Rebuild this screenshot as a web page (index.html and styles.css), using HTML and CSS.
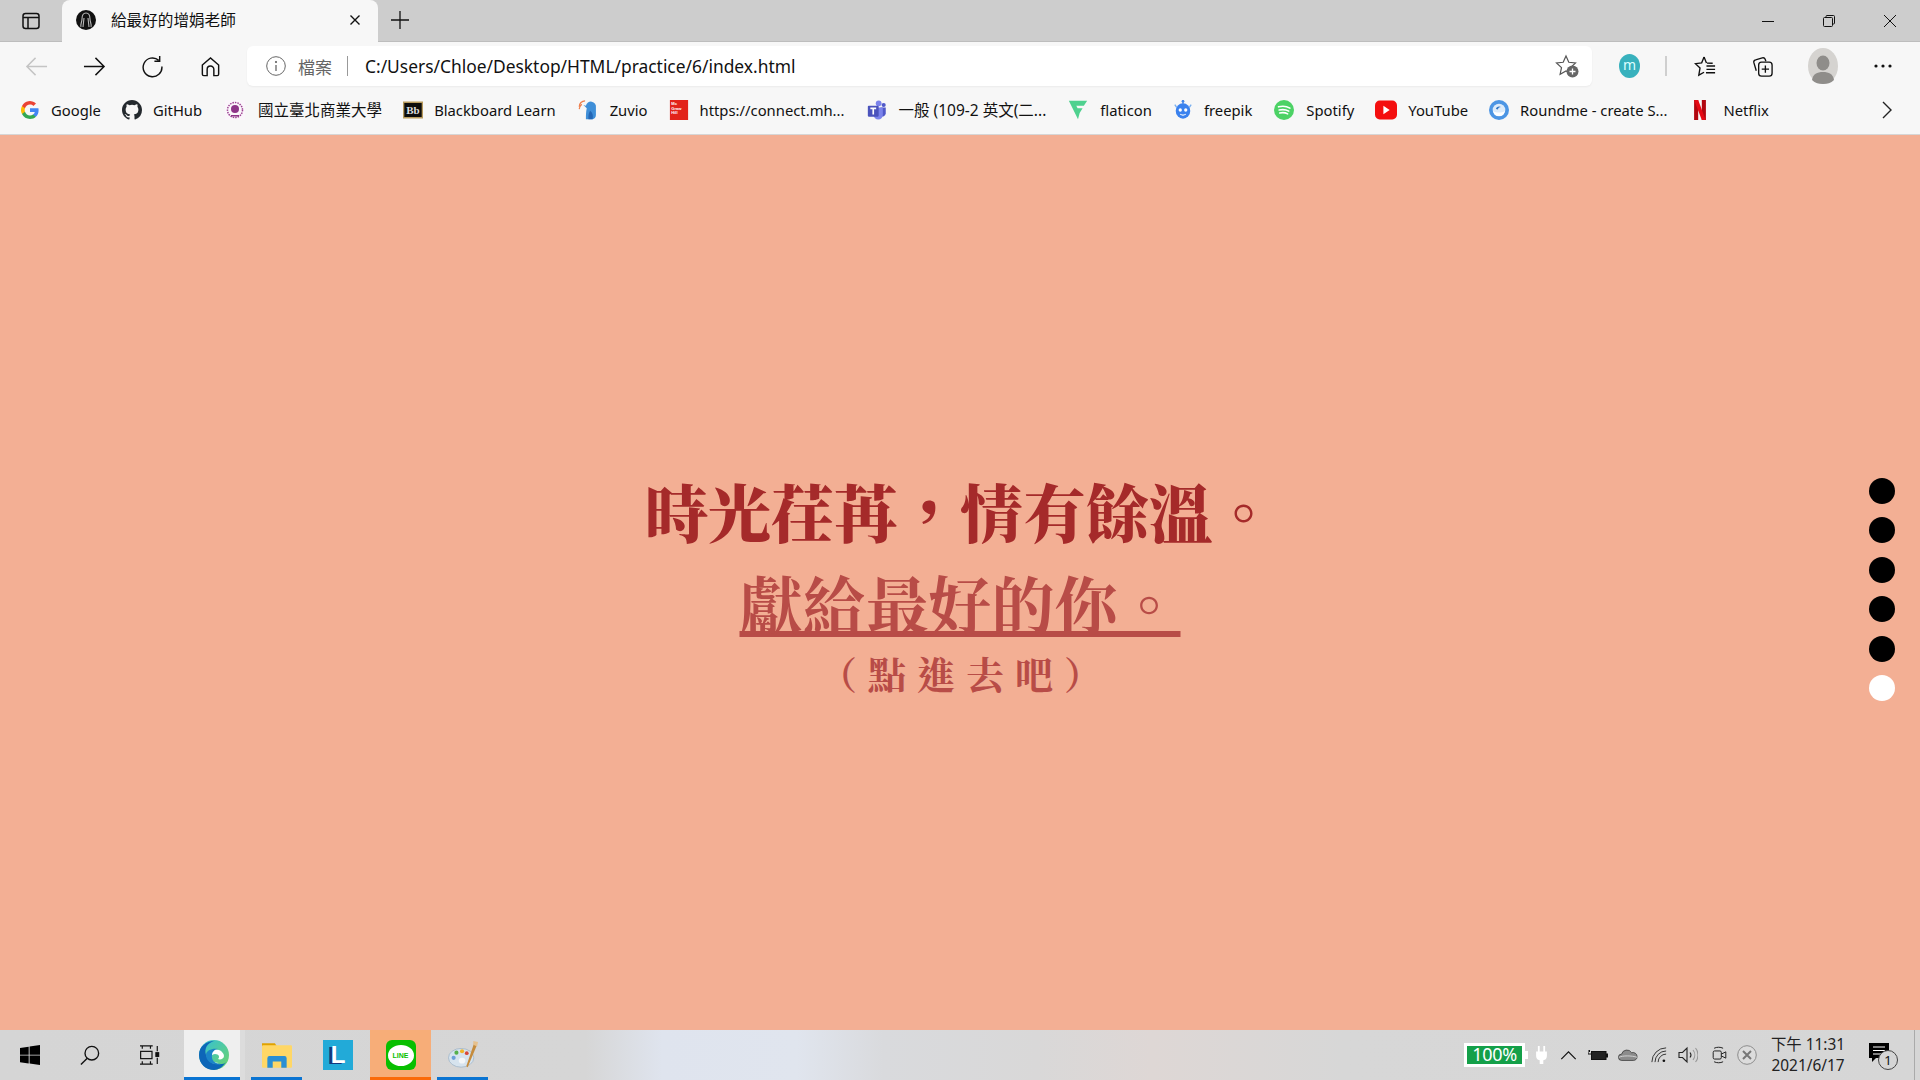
FILE: index.html
```html
<!DOCTYPE html>
<html lang="zh-Hant">
<head>
<meta charset="utf-8">
<title>給最好的增娟老師</title>
<link rel="stylesheet" href="styles.css">
</head>
<body>
<div class="tabstrip">
  <div class="tabside"><svg class="ic20" viewBox="0 0 20 20" fill="none" stroke="#111" stroke-width="1.5"><rect x="2" y="2.5" width="16" height="15" rx="2.5"/><path d="M2 6.5h16M7 6.5v11"/></svg></div>
  <div class="tab">
    <svg class="favicon" viewBox="0 0 20 20"><circle cx="10" cy="10" r="10" fill="#111"/><path d="M10 3c-3 0-4 3-4 6s-2 6-1 8M10 3c3 0 4 3 4 6s2 6 1 8M8 8l-1 9M12 8l1 9" stroke="#bbb" stroke-width="1.1" fill="none"/></svg>
    <span class="tabtitle">給最好的增娟老師</span>
    <svg class="tabx" viewBox="0 0 12 12" stroke="#111" stroke-width="1.4"><path d="M1.5 1.5l9 9M10.5 1.5l-9 9"/></svg>
  </div>
  <svg class="newtab" viewBox="0 0 18 18" stroke="#111" stroke-width="1.3"><path d="M9 0v18M0 9h18"/></svg>
  <div class="winctl">
    <svg class="winbtn" viewBox="0 0 14 14" stroke="#111" stroke-width="1"><path d="M1 7.5h12"/></svg>
    <svg class="winbtn" viewBox="0 0 14 14" fill="none" stroke="#111" stroke-width="1"><rect x="1.5" y="3.5" width="9" height="9" rx="1"/><path d="M4 3.5V2.5a1 1 0 0 1 1-1h6.500a1 1 0 0 1 1 1V9a1 1 0 0 1-1 1h-1"/></svg>
    <svg class="winbtn" viewBox="0 0 14 14" stroke="#111" stroke-width="1"><path d="M1 1l12 12M13 1L1 13"/></svg>
  </div>
</div>

<div class="toolbar">
  <div class="navbtns">
    <svg class="ic24" viewBox="0 0 24 24" fill="none" stroke="#c4c4c4" stroke-width="1.5"><path d="M23 12H2M11 3l-9 9 9 9"/></svg>
    <svg class="ic24" viewBox="0 0 24 24" fill="none" stroke="#111" stroke-width="1.5"><path d="M1 12h21M13 3l9 9-9 9"/></svg>
    <svg class="ic24" viewBox="0 0 24 24" fill="none" stroke="#111" stroke-width="1.5"><path d="M18.500 5.500A9.800 9.800 0 1 0 21.800 12M19.500 1v5.500H14"/></svg>
    <svg class="ic24" viewBox="0 0 24 24" fill="none" stroke="#111" stroke-width="1.5"><path d="M3.500 10.500L12 3l8.500 7.500V20a1.500 1.500 0 0 1-1.500 1.500h-3.500V15a3.500 3.500 0 0 0-7 0v6.500H5A1.500 1.500 0 0 1 3.500 20z"/></svg>
  </div>
  <div class="addr">
    <svg class="info" viewBox="0 0 20 20" fill="none" stroke="#666" stroke-width="1"><circle cx="10" cy="10" r="9.300"/><path d="M10 9v6" stroke-width="1.300"/><circle cx="10" cy="6" r=".7" fill="#666"/></svg>
    <span class="scheme">檔案</span>
    <span class="sep"></span>
    <span class="url">C:/Users/Chloe/Desktop/HTML/practice/6/index.html</span>
    <svg class="favadd" viewBox="0 0 24 24"><path d="M11 2l2.800 6.300 6.700.7-5 4.600 1.400 6.700L11 17l-5.900 3.300 1.400-6.700-5-4.600 6.700-.7z" fill="none" stroke="#555" stroke-width="1.200"/><circle cx="17.500" cy="17.500" r="6" fill="#666"/><path d="M17.500 14.500v6M14.500 17.500h6" stroke="#fff" stroke-width="1.300"/></svg>
  </div>
  <div class="tools">
    <span class="mext">m</span>
    <span class="vsep"></span>
    <svg class="ic24" viewBox="0 0 24 24" fill="none" stroke="#111" stroke-width="1.400"><path d="M13.500 8.500L19.500 8.600M10.500 2L13 8.300M10.500 2L8 8.200 1.500 9l4.800 4.500L5 21l5.500-3"/><path d="M13 11.500h9M13 15h9M12.500 18.500h9.500"/></svg>
    <svg class="ic24" viewBox="0 0 24 24" fill="none" stroke="#111" stroke-width="1.400"><path d="M5.500 16.500L3 8a2.500 2.500 0 0 1 1.800-3l7-2a2.500 2.500 0 0 1 3 1.500l.7 2"/><rect x="8" y="7.500" width="14" height="14.500" rx="3"/><path d="M15 11v7.500M11.200 14.800h7.600"/></svg>
    <span class="avatar"><svg viewBox="0 0 30 36"><ellipse cx="15" cy="18" rx="15" ry="18" fill="#d5d3d0"/><ellipse cx="15" cy="15" rx="6.500" ry="7.500" fill="#8f8d8a"/><path d="M4 32c1-6 5-8 11-8s10 2 11 8c-3 3-7 4-11 4s-8-1-11-4z" fill="#8f8d8a"/></svg></span>
    <svg class="dots3" viewBox="0 0 18 4" fill="#111"><circle cx="2" cy="2" r="1.600"/><circle cx="9" cy="2" r="1.600"/><circle cx="16" cy="2" r="1.600"/></svg>
  </div>
</div>

<div class="bookmarks">
  <a class="bm"><svg class="bi" viewBox="0 0 20 20"><path d="M18.600 10.200c0-.7-.1-1.300-.2-1.900H10v3.600h4.800a4.100 4.100 0 0 1-1.800 2.700v2.200h2.900c1.700-1.600 2.700-3.900 2.700-6.600z" fill="#4285f4"/><path d="M10 19c2.400 0 4.500-.8 5.900-2.200L13 14.600c-.8.500-1.800.9-3 .9-2.300 0-4.300-1.600-5-3.700H2v2.300A9 9 0 0 0 10 19z" fill="#34a853"/><path d="M5 11.800a5.300 5.300 0 0 1 0-3.600V5.900H2a9 9 0 0 0 0 8.200z" fill="#fbbc05"/><path d="M10 4.600c1.300 0 2.500.5 3.400 1.300L16 3.400A9 9 0 0 0 2 5.900l3 2.300c.7-2.100 2.700-3.600 5-3.600z" fill="#ea4335"/></svg><span>Google</span></a>
  <a class="bm"><svg class="bi" viewBox="0 0 16 16"><path fill="#24292e" d="M8 0C3.580 0 0 3.580 0 8c0 3.540 2.290 6.530 5.470 7.590.4.070.55-.17.55-.38v-1.340c-2.230.48-2.700-1.070-2.700-1.070-.36-.92-.89-1.170-.89-1.170-.73-.5.050-.49.050-.49.800.060 1.230.82 1.230.82.710 1.220 1.870.87 2.330.66.070-.52.280-.87.510-1.070-1.780-.2-3.640-.89-3.640-3.950 0-.87.310-1.590.82-2.150-.08-.2-.36-1.020.08-2.120 0 0 .67-.21 2.200.82a7.600 7.600 0 0 1 4 0c1.530-1.040 2.200-.82 2.200-.82.440 1.100.16 1.920.08 2.120.51.560.82 1.270.82 2.150 0 3.070-1.870 3.750-3.650 3.950.29.250.54.730.54 1.480v2.200c0 .21.150.46.550.38A8 8 0 0 0 16 8c0-4.420-3.580-8-8-8z"/></svg><span>GitHub</span></a>
  <a class="bm ntub"><svg class="bi" viewBox="0 0 20 20"><rect width="20" height="20" fill="#fbf6fb"/><circle cx="10" cy="10" r="7.500" fill="none" stroke="#9c3f92" stroke-width="1.500" stroke-dasharray="1.500 1"/><circle cx="10" cy="9" r="4" fill="#8e3488"/><path d="M6 15h8v1.500H6z" fill="#8e3488"/></svg><span class="cjk">國立臺北商業大學</span></a>
  <a class="bm"><svg class="bi" viewBox="0 0 20 20"><rect y="1.500" width="20" height="17" fill="#b79a5c"/><rect x="1.300" y="3" width="17.400" height="14" fill="#0c0c0c"/><text x="10" y="14" class="bbt">Bb</text></svg><span>Blackboard Learn</span></a>
  <a class="bm"><svg class="bi wide" viewBox="0 0 23 24"><path d="M1 8a7 7 0 0 1 7-7M1 11a9 9 0 0 1 3-6" fill="none" stroke="#ee7f4d" stroke-width="1.500"/><path d="M6 6l3 1a6 6 0 0 1 12 2v9c0 3-2 5-4 5H9c0-5 0-8 1-13z" fill="#3f8fd8"/><path d="M14 13c3 2 4 6 3 10h-5c0-4 0-7 2-10z" fill="#2467b5"/></svg><span>Zuvio</span></a>
  <a class="bm"><svg class="bi" viewBox="0 0 20 22"><rect width="20" height="22" fill="#e2231a"/><text x="1.500" y="6" class="mht">Mc</text><text x="1.500" y="10.500" class="mht">Graw</text><text x="1.500" y="15" class="mht">Hill</text></svg><span>https://connect.mh...</span></a>
  <a class="bm"><svg class="bi wide" viewBox="0 0 22 24"><circle cx="13" cy="4" r="3.500" fill="#7b83eb"/><circle cx="19" cy="6" r="2.500" fill="#5059c9"/><path d="M15 9h6.500v7a4 4 0 0 1-6.500 3z" fill="#5059c9"/><path d="M7 9h11v9a5.500 5.500 0 0 1-11 0z" fill="#7b83eb"/><rect y="7" width="13" height="13" rx="1" fill="#4b53bc"/><path d="M3 10h7M6.500 10v7.500" stroke="#fff" stroke-width="2"/></svg><span class="cjk">一般 (109-2 英文(二...</span></a>
  <a class="bm"><svg class="bi wide" viewBox="0 0 22 24"><path d="M0 1h22l-4 6H9l1.500 3h6l-3.500 5.500H13L11 23z" fill="#4fd18f"/></svg><span>flaticon</span></a>
  <a class="bm"><svg class="bi" viewBox="0 0 20 22"><path d="M10 0v4" stroke="#4285e8" stroke-width="1.500"/><circle cx="10" cy="1.500" r="1.500" fill="#4285e8"/><path d="M1 5l2 3M19 5l-2 3" stroke="#7ab0f0" stroke-width="1.500"/><ellipse cx="10" cy="12" rx="8" ry="8.500" fill="#3b82ee"/><circle cx="7" cy="11" r="1.800" fill="#fff"/><circle cx="13" cy="11" r="1.800" fill="#fff"/><path d="M7 15.500c2 1.500 4 1.500 6 0" stroke="#fff" stroke-width="1.200" fill="none"/></svg><span>freepik</span></a>
  <a class="bm"><svg class="bi wide" viewBox="0 0 22 22"><circle cx="11" cy="11" r="11" fill="#4cd265"/><path d="M5 7.500c4-1 9-.6 12.500 1.400M5.700 11c3.500-.8 7.500-.5 10.500 1.200M6.300 14.300c3-.6 6.200-.4 8.700 1" fill="none" stroke="#fff" stroke-width="1.800" stroke-linecap="round"/></svg><span>Spotify</span></a>
  <a class="bm"><svg class="bi wide" viewBox="0 0 21 18"><rect width="21" height="18" rx="4.500" fill="#f40f0f"/><path d="M8 5l6 4-6 4z" fill="#fff"/></svg><span>YouTube</span></a>
  <a class="bm"><svg class="bi" viewBox="0 0 20 20"><circle cx="10" cy="10" r="10" fill="#4c95e4"/><circle cx="10" cy="10" r="6.300" fill="#dcebfa"/><path d="M4 11c3 2 9 2 12 0-1 4-3 5-6 5s-5-1-6-5z" fill="#fff"/><path d="M7 9c0-2 3-3.500 5-2-2 0-3 1-3 2.500z" fill="#2f74c4"/></svg><span>Roundme - create S...</span></a>
  <a class="bm"><svg class="bi narrow" viewBox="0 0 13 22"><path d="M0 0h4.500v22L0 22.800z" fill="#b1060f"/><path d="M8.500 0H13v22.800L8.500 22z" fill="#b1060f"/><path d="M0 0h4.500l8.500 22.800-4.500-.8z" fill="#e50914"/></svg><span>Netflix</span></a>
  <svg class="more" viewBox="0 0 10 18" fill="none" stroke="#222" stroke-width="1.400"><path d="M1 1l8 8-8 8"/></svg>
</div>

<main class="page">
  <div class="hero">
    <h1 class="line1">時光荏苒，情有餘溫。</h1>
    <a class="line2">獻給最好的你。</a>
    <p class="line3">（點進去吧）</p>
  </div>
  <div class="dotnav">
    <span class="dot"></span><span class="dot"></span><span class="dot"></span><span class="dot"></span><span class="dot"></span><span class="dot on"></span>
  </div>
</main>

<footer class="taskbar">
  <div class="tbleft">
    <span class="tb first"><svg class="ic20b" viewBox="0 0 20 20" fill="#000"><path d="M0 3l8.700-1.300v8H0zM9.600 1.600L20 0v9.700H9.600zM0 10.600h8.700v8L0 17.300zM9.600 10.600H20V20L9.600 18.500z"/></svg></span>
    <span class="tb"><svg class="ic20b" viewBox="0 0 22 22" fill="none" stroke="#111" stroke-width="1.500"><circle cx="13" cy="9" r="7.500"/><path d="M8 14.500L1 21.500"/></svg></span>
    <span class="tb"><svg class="ic20b" viewBox="0 0 22 20" fill="none" stroke="#111" stroke-width="1.300"><path d="M0 0h14M0 20h14M2.500 0v3M11.500 0v3M2.500 17v3M11.500 17v3"/><rect x=".7" y="6" width="12.500" height="8"/><path d="M19 0v6M19 13v7"/><rect x="17.500" y="7.500" width="3" height="4" fill="#111"/></svg></span>
    <span class="tb app active"><svg class="ic30" viewBox="0 0 30 30"><defs><linearGradient id="eg" x1="0" y1="0" x2="1" y2="1"><stop offset="0" stop-color="#32bfdb"/><stop offset="1" stop-color="#6fd568"/></linearGradient></defs><circle cx="15" cy="15" r="15" fill="url(#eg)"/><path d="M0 15C0 6 8 1 15 1 8 3 5 9 7 15c2 6 9 10 16 9 2 0 3-1 4-2-3 5-8 8-12 8C7 30 0 24 0 15z" fill="#0d66b8"/><path d="M9 17c0-6 6-9 11-7 3 1 5 4 5 6 0 3-4 4-6 3 2-2 1-5-3-5-3 0-5 3-3 6 1 2 4 3 7 3-5 2-11-1-11-6z" fill="#fff"/><path d="M7 15c0 7 8 11 15 9-5 0-10-3-9-9 0-3 3-6 6-6-5-1-12 1-12 6z" fill="#1b84c8"/></svg></span>
    <span class="tb app running"><svg class="ic30" viewBox="0 0 28 24"><path d="M0 1h12l2 3h-14z" fill="#e0a200"/><rect y="3" width="28" height="21" rx="1" fill="#ffd766"/><path d="M5 24v-9a2 2 0 0 1 2-2h14a2 2 0 0 1 2 2v9h-5v-6h-8v6z" fill="#2a8fd4"/></svg></span>
    <span class="tb app plain"><span class="lapp"><span class="lletter">L</span></span></span>
    <span class="tb app line"><span class="lineapp"><span class="linebubble">LINE</span></span></span>
    <span class="tb app running"><svg class="ic30" viewBox="0 0 32 30"><ellipse cx="14" cy="18" rx="13.500" ry="10" fill="#d6e3ee" stroke="#9db3c6" stroke-width=".8"/><ellipse cx="15" cy="21" rx="3.500" ry="3" fill="#f4f6f8"/><circle cx="6" cy="18" r="2.200" fill="#6c9fd8"/><circle cx="9" cy="12.500" r="2.200" fill="#55b04b"/><circle cx="15" cy="11" r="2.200" fill="#f0b428"/><circle cx="20" cy="13" r="2" fill="#d8483a"/><path d="M28 2l3 2-10 24-1.500-1z" fill="#c58b3c"/><path d="M27 0l5 1-1 5-4-2z" fill="#e6c08c"/></svg></span>
  </div>
  <div class="tray">
    <span class="batt"><span class="battlabel">100%</span><i class="battnub"></i></span>
    <svg class="plug" viewBox="0 0 12 20" fill="#fff"><path d="M2 0h2v6H2zM8 0h2v6H8zM0 6h12v5a5 5 0 0 1-4 4.800V20H4v-4.200A5 5 0 0 1 0 11z"/></svg>
    <svg class="chev" viewBox="0 0 18 10" fill="none" stroke="#111" stroke-width="1.300"><path d="M1 9l8-8 8 8"/></svg>
    <svg class="trayi bat" viewBox="0 0 20 12"><path d="M0 1v4h3M1.500 1v2" stroke="#111" fill="none"/><rect x="3.500" y="2.500" width="14.500" height="8" fill="#222" stroke="#111"/><rect x="18" y="4.500" width="2" height="4" fill="#111"/></svg>
    <svg class="trayi cloud" viewBox="0 0 22 14"><path d="M4 13a3.500 3.500 0 0 1 0-7 6 6 0 0 1 11-1.500A4.500 4.500 0 0 1 21 9c0 2-1.500 4-4 4z" fill="#8c8c8c" stroke="#222" stroke-width=".7"/><path d="M1 9.500c4-2 14-2 20 0" stroke="#d8d8d8" fill="none"/></svg>
    <svg class="trayi wifi" viewBox="0 0 18 18" fill="none" stroke="#333" stroke-width="1.100"><path d="M1 17A16 16 0 0 1 17 1M4.500 17A12.500 12.500 0 0 1 17 4.500M8 17a9 9 0 0 1 9-9" /><circle cx="14.500" cy="15.500" r="1.500" fill="#111" stroke="none"/></svg>
    <svg class="trayi vol" viewBox="0 0 20 18" fill="none" stroke="#222" stroke-width="1.100"><path d="M1 6.500h3.500L9 2v14L4.500 11.500H1z"/><path d="M12 6.500a4 4 0 0 1 0 5" /><path d="M15 4a8 8 0 0 1 0 10M17.500 2a11 11 0 0 1 0 14" stroke="#999"/></svg>
    <svg class="trayi cam" viewBox="0 0 16 20" fill="none" stroke="#222" stroke-width="1.100"><rect x="1" y="5.500" width="9" height="9" rx="1.500"/><path d="M10 9l5-2.500v7L10 11M2 2.500c3-1.500 7-1.500 10 0M2 17.500c3 1.500 7 1.500 10 0"/></svg>
    <svg class="trayx" viewBox="0 0 20 20"><circle cx="10" cy="10" r="9.300" fill="#dcdcdc" stroke="#8c8c8c" stroke-width="1"/><path d="M6 6l8 8M14 6l-8 8" stroke="#777" stroke-width="2"/></svg>
    <div class="clock"><span>下午 11:31</span><span>2021/6/17</span></div>
    <span class="notif"><svg viewBox="0 0 20 20" class="notifi"><path d="M0 0h20v15H7l-4 4v-4H0z" fill="#000"/><path d="M4 4h12M4 7.500h12M4 11h8" stroke="#fff"/></svg><span class="badge">1</span></span>
    <i class="showdesk"></i>
  </div>
</footer>
</body>
</html>
```

FILE: styles.css
```css
* { box-sizing: border-box; }
html, body { margin: 0; height: 100%; }
body {
  width: 1920px;
  height: 1080px;
  overflow: hidden;
  display: flex;
  flex-direction: column;
  font-family: "Noto Sans", "Noto Sans CJK TC", sans-serif;
  color: #111;
  background: #f3af94;
}
svg { display: block; flex: none; }

/* tab strip */
.tabstrip { height: 42px; flex: none; display: flex; align-items: flex-end; background: #cdcdcd; border-bottom: 1px solid #bdbdbd; }
.tabside { width: 62px; height: 41px; display: flex; align-items: center; justify-content: center; }
.ic20 { width: 20px; height: 20px; }
.tab { width: 316px; height: 42px; margin-bottom: -1px; background: #f7f7f7; border-radius: 8px 8px 0 0; display: flex; align-items: center; padding: 0 17px 3px 14px; }
.favicon { width: 20px; height: 20px; }
.tabtitle { margin-left: 15px; margin-bottom: 1px; font-size: 15.600px; flex: 1; font-family: "Noto Sans CJK TC", sans-serif; }
.tabx { width: 12px; height: 12px; }
.newtab { width: 18px; height: 18px; margin: 0 0 12px 13px; }
.winctl { margin-left: auto; display: flex; height: 41px; align-items: center; padding-right: 23px; gap: 47px; }
.winbtn { width: 14px; height: 14px; }

/* toolbar */
.toolbar { height: 48px; flex: none; display: flex; background: #f7f7f7; align-items: center; }
.navbtns { width: 247px; display: flex; gap: 35px; padding-left: 25px; flex: none; }
.ic24 { width: 23px; height: 23px; }
.addr { width: 1345px; height: 40px; flex: none; background: #fff; border-radius: 6px; display: flex; align-items: center; padding: 0 13px 0 19px; box-shadow: 0 1px 2px rgba(0,0,0,.05); }
.info { width: 20px; height: 20px; }
.scheme { margin-left: 12px; color: #666; font-size: 17px; font-family: "Noto Sans CJK TC", sans-serif; }
.sep { width: 1px; height: 20px; background: #999; margin: 0 17px 0 15px; }
.url { font-size: 17.400px; flex: 1; }
.favadd { width: 24px; height: 24px; }
.tools { flex: 1; display: flex; align-items: center; padding-left: 27px; }
.mext { width: 21px; height: 24px; border-radius: 50%; background: #38b1bd; color: #dff; font-size: 14px; line-height: 22px; text-align: center; }
.vsep { width: 2px; height: 20px; background: #cfcfcf; margin: 0 27px 0 25px; }
.tools .ic24 { margin-right: 34px; }
.avatar { width: 30px; height: 36px; margin-right: 36px; }
.dots3 { width: 18px; height: 4px; }

/* bookmarks */
.bookmarks { height: 45px; flex: none; display: flex; align-items: center; background: #f7f7f7; border-bottom: 1.500px solid #d6d6d6; padding: 0 0 5px 20px; gap: 21px; font-size: 14.800px; position: relative; }
.bm { display: flex; align-items: center; gap: 11px; white-space: nowrap; }
.bm.ntub { margin-left: 2px; gap: 13px; }
.bm .cjk { font-family: "Noto Sans", "Noto Sans CJK TC", sans-serif; font-size: 15.500px; }
.bi { width: 20px; height: 20px; }
.bi.wide { width: 22px; }
.bi.narrow { width: 14px; margin-left: 5px; margin-right: 5px; }
.bbt { font-family: "Liberation Serif", serif; font-size: 11px; font-weight: 700; fill: #ddd; text-anchor: middle; }
.mht { font-family: "Liberation Sans", sans-serif; font-size: 4.500px; font-weight: 700; fill: #fff; }
.more { width: 10px; height: 18px; margin-left: auto; margin-right: 28px; }

/* page */
.page { flex: 1; position: relative; display: flex; align-items: center; justify-content: center; background: #f3af94; }
.hero { display: flex; flex-direction: column; align-items: center; font-family: "Noto Serif CJK TC", "Noto Sans CJK TC", serif; color: #a52a2a; margin-top: -4px; }
.line1 { margin: 0; font-size: 63px; line-height: 92px; font-weight: 900; }
.line2 { font-size: 63px; line-height: 92px; font-weight: 700; color: #b84c47; text-decoration: underline; text-decoration-thickness: 6px; text-underline-offset: 2px; }
.line3 { margin: 0; padding-left: 12px; font-size: 38px; line-height: 50px; font-weight: 700; letter-spacing: 11px; color: #b84c47; }
.dotnav { position: absolute; right: 25px; top: 343px; display: flex; flex-direction: column; gap: 13.400px; }
.dot { width: 26px; height: 26px; border-radius: 50%; background: #000; }
.dot.on { background: #fff; }

/* taskbar */
.taskbar { height: 50px; flex: none; display: flex; justify-content: space-between; background: linear-gradient(90deg, #d5d5d5 0, #d6d6d6 30.500%, #dfe4ee 34.500%, #e0e5ee 41.500%, #d9dadd 46%, #d9d8d8 54%, #ded7d5 60%, #d7d7d7 70%, #d6d6d6 100%); }
.tbleft { display: flex; }
.tb { height: 50px; width: 60px; display: flex; align-items: center; justify-content: center; }
.ic20b { width: 20px; height: 20px; }
.tb.app { border-bottom: 3px solid transparent; width: 62px; padding-top: 3px; }
.tb.active { width: 56px; margin: 0 11px 0 4px; padding-left: 4px; background: #efefef; border-bottom-color: #0a74d2; box-shadow: 5px 0 0 #dcdcdc; }
.tb.running { border-bottom-color: #0a74d2; width: 51px; }
.tb.plain { width: 68px; padding-left: 4px; }
.tb.line { background: #f7ad78; border-bottom-color: #fb6a09; width: 61px; margin-right: 6px; }
.ic30 { width: 30px; height: 30px; }
.lapp { width: 30px; height: 30px; background: #22aad8; display: flex; align-items: center; justify-content: center; }
.lletter { color: #fff; font: 700 24px/30px "Liberation Sans", sans-serif; text-shadow: -3px 1px 0 #12387f; }
.lineapp { width: 30px; height: 30px; border-radius: 6px; background: #08bf00; display: flex; align-items: center; justify-content: center; }
.linebubble { width: 26px; height: 21px; border-radius: 50%; background: #fff; color: #08bf00; font: 700 7px/21px "Liberation Sans", sans-serif; text-align: center; }

.tray { display: flex; align-items: center; }
.batt { width: 61px; height: 24px; background: #14a049; border: 3px solid #fff; color: #fff; font-size: 18px; line-height: 16px; text-align: center; position: relative; margin-right: 11px; }
.battlabel { letter-spacing: -.3px; }
.battnub { position: absolute; right: -6px; top: 5px; width: 3px; height: 8px; background: #fff; }
.plug { width: 11px; height: 18px; margin-right: 13px; }
.chev { width: 17px; height: 9px; margin-right: 11px; }
.trayi { height: 18px; }
.bat { width: 20px; margin-right: 10px; }
.cloud { width: 20px; margin-right: 13px; }
.wifi { width: 16px; margin-right: 11px; }
.vol { width: 20px; margin-right: 14px; }
.cam { width: 15px; margin-right: 10px; }
.trayx { width: 20px; height: 20px; margin-right: 15px; }
.clock { display: flex; flex-direction: column; align-items: center; font-size: 15.400px; line-height: 21px; width: 72px; margin-right: 25px; color: #222; font-family: "Noto Sans", "Noto Sans CJK TC", sans-serif; white-space: nowrap; }
.notif { width: 32px; height: 30px; position: relative; margin-right: 13px; }
.notifi { width: 20px; height: 20px; margin-top: 3px; }
.badge { position: absolute; left: 9px; top: 10px; width: 20px; height: 20px; border-radius: 50%; border: 1px solid #444; background: #d5d5d5; font-size: 13px; line-height: 18px; text-align: center; }
.showdesk { width: 1px; height: 50px; background: #aaa; margin-right: 5px; }
```
